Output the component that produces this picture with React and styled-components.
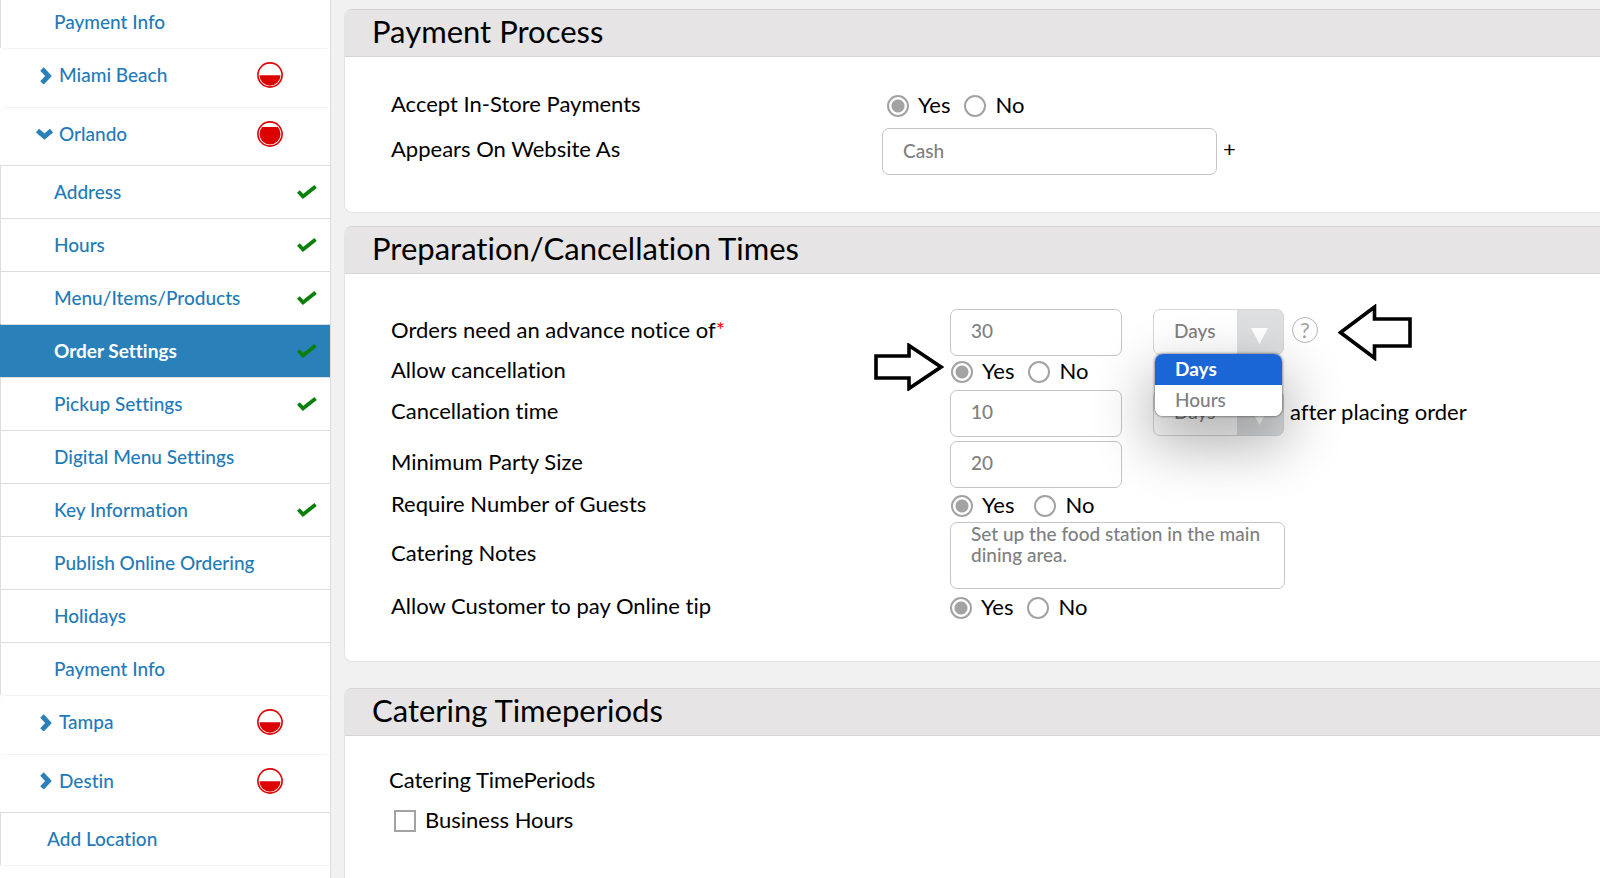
import React, {useState} from 'react'

import styled, {createGlobalStyle} from 'styled-components'

const color = {
  link: '#1f7bb8',
  active: '#2a80b9',
  border: '#dddddd',
  faint: '#f3f3f3',
  field: '#c4c4c4',
  fieldText: '#808080',
  control: '#a3a3a3',
  page: '#f1f1f1',
  header: '#e6e4e5',
  red: '#dd0000',
  green: '#0a800a'
}

const fontFamily = {
  main: "Lato, 'Open Sans', sans-serif"
}

const GlobalStyle = createGlobalStyle`
  * {
    box-sizing: border-box;
  }

  body {
    margin: 0;
    background-color: ${color.page};
    color: #000;
    font-family: ${fontFamily.main};
    font-size: 22px;
    font-variant-ligatures: none;
    line-height: 24px;
  }
`

const Layout = styled.div`
  display: flex;
  min-height: 100vh;
  overflow: hidden;
`

/* sidebar */

const Sidebar = styled.nav`
  flex: 0 0 331px;
  margin-top: -5px;
  background-color: #fff;
  border-right: 1px solid ${color.border};
  font-size: 19px;
  font-weight: 500;
`

const NavLink = styled.a`
  display: flex;
  align-items: center;
  height: 53px;
  padding: 0 12px 0 ${props => props.$indent || 53}px;
  border-top: 1px solid ${color.border};
  border-left: 1px solid ${props => props.$active ? color.active : color.border};
  background-color: ${props => props.$active ? color.active : '#fff'};
  color: ${props => props.$active ? '#fff' : color.link};
  font-weight: ${props => props.$active ? 700 : 500};
  text-decoration: none;

  svg {
    margin-left: auto;
  }
`

const GroupButton = styled.button`
  display: flex;
  align-items: center;
  width: 100%;
  height: ${props => props.$last ? 58 : 59}px;
  padding: 0 47px 6px 36px;
  border: none;
  border-top: 1px solid ${color.faint};
  border-radius: 5px 5px 0 0;
  background-color: #fff;
  color: ${color.link};
  font: inherit;
  text-align: left;
`

const GroupName = styled.span`
  flex-grow: 1;
  margin-left: 6px;
`

const SidebarEnd = styled.div`
  border-top: 1px solid ${color.faint};
  border-radius: 5px 5px 0 0;
`

const CheckIcon = () => (
  <svg width='22' height='16' viewBox='0 0 22 16' fill='none'>
    <path d='M2.4 7.5 L7 12.5 L19.6 2.5' stroke={color.green} strokeWidth='3.8' />
  </svg>
)

const ChevronIcon = ({isOpen}) => (
  <svg width='17' height='17' viewBox='0 0 17 17' fill='none'>
    <path d={isOpen ? 'M1.5 5.5 L8.5 11.5 L15.5 5.5' : 'M6 2 L12.5 9 L6 16'}
      stroke={color.active} strokeWidth='4.8' />
  </svg>
)

const StatusIcon = ({isHigh}) => (
  <svg width='26' height='26' viewBox='0 0 26 26' fill='none'>
    <circle cx='13' cy='13' r='12.1' stroke={color.red} strokeWidth='1.6' />
    <path fill={color.red}
      d={isHigh
        ? 'M5.2 6 H20.8 A10.5 10.5 0 1 1 5.2 6 Z'
        : 'M2.5 13.2 H23.5 A10.5 10.5 0 0 1 2.5 13.2 Z'} />
  </svg>
)

const NavItem = ({name, isDone, isActive, indent}) => (
  <NavLink href='#' $active={isActive} $indent={indent}
    aria-current={isActive ? 'page' : undefined}>
    {name}
    {isDone && <CheckIcon />}
  </NavLink>
)

const NavGroup = ({name, isOpen, isLast}) => (
  <GroupButton type='button' aria-expanded={!!isOpen} $last={isOpen || isLast}>
    <ChevronIcon isOpen={isOpen} />
    <GroupName>{name}</GroupName>
    <StatusIcon isHigh={isOpen} />
  </GroupButton>
)

const orlandoItems = [
  {name: 'Address', isDone: true},
  {name: 'Hours', isDone: true},
  {name: 'Menu/Items/Products', isDone: true},
  {name: 'Order Settings', isDone: true, isActive: true},
  {name: 'Pickup Settings', isDone: true},
  {name: 'Digital Menu Settings'},
  {name: 'Key Information', isDone: true},
  {name: 'Publish Online Ordering'},
  {name: 'Holidays'},
  {name: 'Payment Info'}
]

/* cards */

const Main = styled.main`
  display: flex;
  flex-direction: column;
  flex: 1;
  min-width: 0;
  padding: 9px 0 0 13px;
`

const Card = styled.section`
  margin-bottom: ${props => props.$gap || 0}px;
  border: 1px solid #e3e3e3;
  border-top-color: #d4d4d4;
  border-right: none;
  border-radius: 8px 0 0 8px;
  background-color: #fff;

  &:last-child {
    flex-grow: 1;
    border-bottom: none;
    border-bottom-left-radius: 0;
  }
`

const CardTitle = styled.h2`
  height: 47px;
  margin: 0;
  padding-left: 27px;
  border-bottom: 1px solid #d4d4d4;
  border-top-left-radius: 7px;
  background-color: ${color.header};
  font-size: 31px;
  font-weight: 400;
  line-height: 42px;
`

const CardBody = styled.div`
  padding: ${props => props.$padding};
`

const FormRow = styled.div`
  display: grid;
  grid-template-columns: ${props => props.$labelWidth}px 1fr;
  grid-template-rows: ${props => props.$height}px;
  align-items: center;
`

const Caption = styled.label`
  padding-bottom: 5px;
`

const Required = styled.span`
  color: #f00;
`

const Field = styled.div`
  position: relative;
  display: flex;
  align-items: center;
  padding-left: ${props => props.$inset || 0}px;
`

const TextInput = styled.input`
  width: ${props => props.$wide ? 335 : 172}px;
  height: 47px;
  padding: 0 20px 3px;
  border: 1px solid ${color.field};
  border-radius: 7px;
  background-color: #fff;
  color: ${color.fieldText};
  font: inherit;
  font-size: 19px;
  font-weight: 500;
  outline: none;
`

const Notes = styled.textarea`
  width: 335px;
  height: 67px;
  padding: 0 20px;
  border: 1px solid ${color.field};
  border-radius: 7px;
  color: ${color.fieldText};
  font: inherit;
  font-size: 19px;
  font-weight: 500;
  line-height: 21px;
  resize: none;
  outline: none;
`

const AddButton = styled.button`
  margin-left: 6px;
  padding: 0 0 5px;
  border: none;
  background: none;
  color: #000;
  font: inherit;
`

/* radios and tick boxes */

const RadioGroup = styled.div`
  display: flex;
  gap: ${props => props.$gap}px;
`

const Choice = styled.label`
  display: flex;
  align-items: center;
  gap: 9px;
`

const ChoiceText = styled.span`
  padding-bottom: 2px;
`

const Radio = styled.input`
  appearance: none;
  width: 22px;
  height: 22px;
  margin: 0;
  border: 2px solid ${color.control};
  border-radius: 50%;
  background: #fff;

  &:checked {
    background: radial-gradient(circle, ${color.control} 6px, #fff 7px);
  }
`

const Checkbox = styled.input`
  appearance: none;
  width: 22px;
  height: 22px;
  margin: 0;
  border: 2px solid ${color.control};
  background: #fff;
`

const YesNo = ({name, gap = 14}) => {
  const [value, setValue] = useState('Yes')

  return (
    <RadioGroup role='radiogroup' aria-label={name} $gap={gap}>
      {['Yes', 'No'].map(option => (
        <Choice key={option}>
          <Radio type='radio' name={name} checked={value === option}
            onChange={() => setValue(option)} />
          <ChoiceText>{option}</ChoiceText>
        </Choice>
      ))}
    </RadioGroup>
  )
}

/* unit drop-down */

const SelectBox = styled.div`
  position: relative;
  width: 131px;
  height: 46px;
  margin-left: 31px;

  > svg {
    position: absolute;
    top: 19px;
    right: 16px;
    pointer-events: none;
  }
`

const Select = styled.select`
  appearance: none;
  width: 100%;
  height: 100%;
  padding: 0 20px 2px;
  border: 1px solid #d6d6d6;
  border-radius: 7px;
  background: linear-gradient(to right, #fff 83px, #dddfe1 83px);
  color: ${color.fieldText};
  font: inherit;
  font-size: 19px;
  font-weight: 500;
  outline: none;
`

const Menu = styled.ul`
  position: absolute;
  z-index: 2;
  top: 45px;
  left: 2px;
  width: 127px;
  margin: 0;
  padding: 0;
  border-radius: 8px;
  background-color: #fff;
  box-shadow: 0 0 3px rgba(0, 0, 0, 0.7), 0 24px 56px 6px rgba(0, 0, 0, 0.3);
  list-style: none;
  overflow: hidden;
`

const MenuItem = styled.li`
  height: 31px;
  padding-left: 20px;
  background-color: ${props => props['aria-selected'] ? '#1a66d6' : '#fff'};
  color: ${props => props['aria-selected'] ? '#fff' : color.fieldText};
  font-size: 19px;
  font-weight: ${props => props['aria-selected'] ? 700 : 500};
  line-height: 30px;
`

const UnitSelect = ({label, isOpen}) => {
  const [unit, setUnit] = useState('Days')

  return (
    <SelectBox>
      <Select aria-label={label} value={unit} onChange={e => setUnit(e.target.value)}>
        <option>Days</option>
        <option>Hours</option>
      </Select>
      <svg width='17' height='16' viewBox='0 0 17 16'>
        <path d='M0 0 H17 L8.5 16 Z' fill='#fff' />
      </svg>
      {isOpen && (
        <Menu role='listbox' aria-label={label}>
          {['Days', 'Hours'].map(option => (
            <MenuItem key={option} role='option' aria-selected={unit === option}
              onClick={() => setUnit(option)}>
              {option}
            </MenuItem>
          ))}
        </Menu>
      )}
    </SelectBox>
  )
}

const HelpButton = styled.button`
  width: 26px;
  height: 26px;
  margin: 0 20px 4px 8px;
  padding: 0;
  border: 1px solid #b5b5b5;
  border-radius: 50%;
  background: none;
  color: #a0a0a0;
  font: inherit;
  line-height: 22px;
`

const AfterText = styled.span`
  position: relative;
  z-index: 3;
  margin-left: 6px;
  padding-bottom: 2px;
`

/* pointer that lies over the form, left of the radios */
const Pointer = styled.svg`
  position: absolute;
  top: -16px;
  left: -76px;
`

const App = () => (
  <Layout>
    <GlobalStyle />
    <Sidebar>
      <NavItem name='Payment Info' />
      <NavGroup name='Miami Beach' />
      <NavGroup name='Orlando' isOpen />
      {orlandoItems.map(item => <NavItem key={item.name} {...item} />)}
      <NavGroup name='Tampa' />
      <NavGroup name='Destin' isLast />
      <NavItem name='Add Location' indent={46} />
      <SidebarEnd />
    </Sidebar>

    <Main>
      <Card $gap={13}>
        <CardTitle>Payment Process</CardTitle>
        <CardBody $padding='27px 0 37px 46px'>
          <FormRow $labelWidth={491} $height={44}>
            <Caption as='span'>Accept In-Store Payments</Caption>
            <Field $inset={5}><YesNo name='Accept In-Store Payments' /></Field>
          </FormRow>
          <FormRow $labelWidth={491} $height={47}>
            <Caption htmlFor='website-name'>Appears On Website As</Caption>
            <Field>
              <TextInput id='website-name' defaultValue='Cash' $wide />
              <AddButton type='button' aria-label='Add'>+</AddButton>
            </Field>
          </FormRow>
        </CardBody>
      </Card>

      <Card $gap={26}>
        <CardTitle>Preparation/Cancellation Times</CardTitle>
        <CardBody $padding='34px 0 34px 46px'>
          <FormRow $labelWidth={559} $height={48}>
            <Caption htmlFor='notice'>
              Orders need an advance notice of<Required>*</Required>
            </Caption>
            <Field>
              <TextInput id='notice' defaultValue='30' />
              <UnitSelect label='Notice unit' isOpen />
              <HelpButton type='button' aria-label='Help'>?</HelpButton>
              <svg width='74' height='57' viewBox='0 0 74 57' fill='none'>
                <path d='M2.5 28.5 L36.5 3 V15 H72 V42 H36.5 V54 Z'
                  stroke='#000' strokeWidth='3.6' />
              </svg>
            </Field>
          </FormRow>
          <FormRow $labelWidth={559} $height={32}>
            <Caption as='span'>Allow cancellation</Caption>
            <Field $inset={1}>
              <YesNo name='Allow cancellation' />
              <Pointer width='70' height='48' viewBox='0 0 70 48' fill='none'>
                <path d='M2 13 H35 V2.5 L67 24 L35 45.5 V35 H2 Z'
                  stroke='#000' strokeWidth='3.6' />
              </Pointer>
            </Field>
          </FormRow>
          <FormRow $labelWidth={559} $height={50}>
            <Caption htmlFor='cancel-time'>Cancellation time</Caption>
            <Field>
              <TextInput id='cancel-time' defaultValue='10' />
              <UnitSelect label='Cancellation unit' />
              <AfterText>after placing order</AfterText>
            </Field>
          </FormRow>
          <FormRow $labelWidth={559} $height={52}>
            <Caption htmlFor='party-size'>Minimum Party Size</Caption>
            <Field><TextInput id='party-size' defaultValue='20' /></Field>
          </FormRow>
          <FormRow $labelWidth={559} $height={32}>
            <Caption as='span'>Require Number of Guests</Caption>
            <Field $inset={1}><YesNo name='Require Number of Guests' gap={20} /></Field>
          </FormRow>
          <FormRow $labelWidth={559} $height={67}>
            <Caption htmlFor='notes'>Catering Notes</Caption>
            <Field>
              <Notes id='notes'
                defaultValue='Set up the food station in the main dining area.' />
            </Field>
          </FormRow>
          <FormRow $labelWidth={559} $height={38}>
            <Caption as='span'>Allow Customer to pay Online tip</Caption>
            <Field><YesNo name='Allow Customer to pay Online tip' /></Field>
          </FormRow>
        </CardBody>
      </Card>

      <Card>
        <CardTitle>Catering Timeperiods</CardTitle>
        <CardBody $padding='34px 0 0 44px'>
          <FormRow $labelWidth={559} $height={24}>
            <Caption as='span'>Catering TimePeriods</Caption>
          </FormRow>
          <FormRow $labelWidth={559} $height={54}>
            <Field $inset={5}>
              <Choice>
                <Checkbox type='checkbox' />
                <ChoiceText>Business Hours</ChoiceText>
              </Choice>
            </Field>
          </FormRow>
        </CardBody>
      </Card>
    </Main>
  </Layout>
)

export default App
